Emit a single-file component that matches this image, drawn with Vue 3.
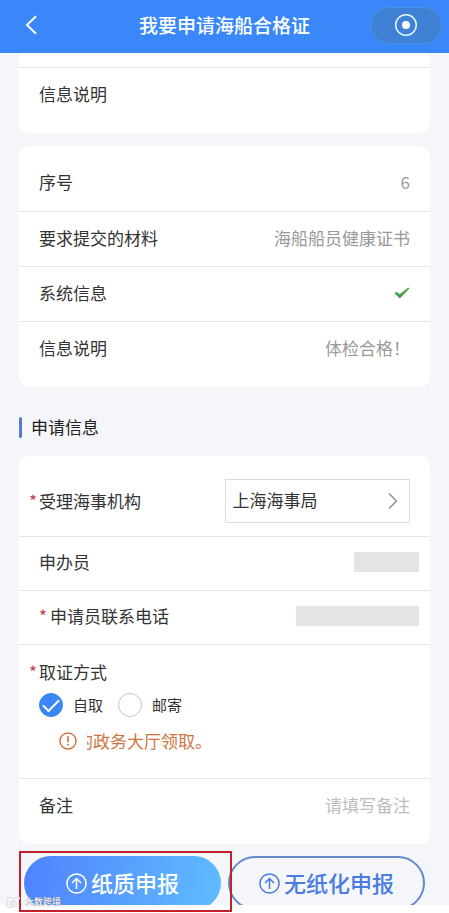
<script setup>
import { ref } from 'vue'

const material = [
  { label: '序号', value: '6' },
  { label: '要求提交的材料', value: '海船船员健康证书' },
  { label: '系统信息', ok: true },
  { label: '信息说明', value: '体检合格！' }
]
const org = ref('上海海事局')
const pickup = ref('self')
const remark = ref('')
</script>

<template>
  <div class="page">
    <header class="topbar">
      <button class="back" type="button" aria-label="返回">
        <svg width="14" height="20" viewBox="0 0 14 20"><path d="M12 1.200 3 10l9 8.800" fill="none" stroke="#fff" stroke-width="2" /></svg>
      </button>
      <h1>我要申请海船合格证</h1>
      <button class="capsule" type="button" aria-label="关闭">
        <svg width="24" height="24" viewBox="0 0 24 24"><circle cx="12" cy="12" r="10.3" fill="none" stroke="#e4f8ff" stroke-width="1.5" /><circle cx="12" cy="12" r="4" fill="#fff" /></svg>
      </button>
    </header>

    <main class="content">
      <section class="card first">
        <div class="row"><span class="label">信息说明</span></div>
      </section>

      <section class="card">
        <div v-for="item in material" :key="item.label" class="row">
          <span class="label">{{ item.label }}</span>
          <svg v-if="item.ok" class="tick" width="16" height="12" viewBox="0 0 16 12"><path d="M.5 6.200 2.600 4.800 5.600 7.200 14.400 .4 15.400 1.500 5.800 11.400Z" fill="#45a047" /></svg>
          <span v-else class="value">{{ item.value }}</span>
        </div>
      </section>

      <h2>申请信息</h2>

      <section class="card form">
        <div class="row org">
          <label class="label" for="org"><span class="star">*</span>受理海事机构</label>
          <div class="picker">
            <select id="org" v-model="org"><option>上海海事局</option></select>
            <svg class="arrow" width="10" height="18" viewBox="0 0 10 18"><path d="M1 1.5 8.5 9 1 16.5" fill="none" stroke="#8c8c8c" stroke-width="1.4" /></svg>
          </div>
        </div>
        <div class="row masked">
          <span class="label">申办员</span>
          <span class="mask short"></span>
        </div>
        <div class="row masked">
          <span class="label"><span class="star inner">*</span>申请员联系电话</span>
          <span class="mask"></span>
        </div>
        <fieldset class="row pickup">
          <legend class="label"><span class="star">*</span>取证方式</legend>
          <div class="choices">
            <label><input v-model="pickup" type="radio" name="pickup" value="self" />自取</label>
            <label><input v-model="pickup" type="radio" name="pickup" value="mail" />邮寄</label>
          </div>
          <div class="notice">
            <svg width="18" height="18" viewBox="0 0 18 18"><circle cx="9" cy="9" r="8" fill="none" stroke="#cf7440" stroke-width="1.4" /><path d="M9 4v6.5M9 12v1.6" stroke="#cf7440" stroke-width="1.6" /></svg>
            <div class="ticker"><span>的政务大厅领取。</span></div>
          </div>
        </fieldset>
        <div class="row">
          <label class="label" for="remark">备注</label>
          <input id="remark" v-model="remark" class="remark" type="text" placeholder="请填写备注" />
        </div>
      </section>
    </main>

    <footer class="actions">
      <div class="buttons">
        <button class="primary" type="button">
          <svg width="21" height="21" viewBox="0 0 21 21"><path d="M10.5 16V5.5M6 10l4.5-4.5L15 10" /><circle cx="10.5" cy="10.5" r="9.6" /></svg>
          <span>纸质申报</span>
        </button>
        <button class="plain" type="button">
          <svg width="21" height="21" viewBox="0 0 21 21"><path d="M10.5 16V5.5M6 10l4.5-4.5L15 10" /><circle cx="10.5" cy="10.5" r="9.6" /></svg>
          <span>无纸化申报</span>
        </button>
      </div>
      <div class="highlight"></div>
      <div class="watermark">
        <svg width="16" height="12" viewBox="0 0 16 12"><path d="M1 2.5 5 1l2 2 3-2 4 1.500M1 3v7l3 1.500 6-1.500V5.500L6 4.500M4 6h3v3H4z" fill="none" stroke="#fff" stroke-width="2" /><path d="M1 2.500 5 1l2 2 3-2 4 1.500M1 3v7l3 1.500 6-1.500V5.500L6 4.500M4 6h3v3H4z" fill="none" stroke="#c3c5c9" stroke-width=".8" /></svg>
        <span>大数跨境</span>
      </div>
    </footer>
  </div>
</template>

<style>
body {
  background: #fff;
}
</style>

<style scoped>
.page {
  font-family: "Noto Sans CJK SC", "Noto Sans", sans-serif;
  font-size: 17px;
  line-height: 24px;
  color: #333;
  background: #f4f6fa;
  border-bottom: 8px solid #fff;
}
.page * {
  box-sizing: border-box;
}
button, input, select {
  font: inherit;
  padding: 0;
  border: 0;
  background: none;
}
svg {
  display: block;
  flex: none;
}
.topbar {
  display: grid;
  grid-template-columns: 72px 1fr 72px;
  align-items: center;
  height: 53px;
  padding: 0 7px 3px;
  background: #3a87f9;
}
.back {
  display: flex;
  align-items: center;
  height: 36px;
  padding-left: 17px;
}
h1 {
  margin: 0;
  font-size: 19px;
  font-weight: 500;
  line-height: 28px;
  text-align: center;
  color: #fff;
}
.capsule {
  display: flex;
  align-items: center;
  justify-content: center;
  height: 37px;
  border: 1px solid #4c90e6;
  border-radius: 19px;
  background: #3f82d5;
}
.content {
  padding: 0 19px;
}
.card {
  padding: 10px 0 11px;
  margin-bottom: 13px;
  border-radius: 10px;
  background: #fff;
}
.card.first {
  padding-top: 14px;
  border-radius: 0 0 10px 10px;
}
.card.first .row {
  border-top: 1px solid #e4e6e8;
}
.row {
  display: flex;
  align-items: center;
  justify-content: space-between;
  min-height: 55px;
  padding: 0 20px 3px;
}
.row + .row {
  border-top: 1px solid #e4e6e8;
}
.label {
  position: relative;
  white-space: nowrap;
}
.value {
  color: #999;
}
.star {
  position: absolute;
  left: -10px;
  color: #c9404c;
}
.star.inner {
  position: static;
  margin-right: 3px;
}
h2 {
  display: flex;
  align-items: center;
  gap: 9px;
  margin: 0;
  padding: 15px 0 17px;
  font-size: 17px;
  font-weight: 400;
  line-height: 24px;
  color: #222;
}
h2::before {
  content: "";
  width: 3px;
  height: 21px;
  border-radius: 2px;
  background: #5a78d8;
}
.form {
  margin-bottom: 7px;
}
.row.org {
  min-height: 70px;
  padding-top: 3px;
}
.picker {
  position: relative;
  width: 50%;
}
.picker select {
  width: 100%;
  height: 44px;
  padding: 0 7px 2px;
  border: 1px solid #dcdcdc;
  border-radius: 0;
  appearance: none;
  color: #333;
}
.arrow {
  position: absolute;
  right: 12px;
  top: 13px;
  pointer-events: none;
}
.row.masked {
  min-height: 54px;
  padding-right: 11px;
}
.mask {
  width: 123px;
  height: 20px;
  background: #e5e3e4;
}
.mask.short {
  width: 65px;
}
.row.pickup {
  display: block;
  min-width: 0;
  margin: 0;
  padding-top: 15px;
  padding-bottom: 25px;
  border: 0;
  border-top: 1px solid #e4e6e8;
}
.pickup legend {
  float: left;
  width: 100%;
  padding: 0;
}
.choices {
  display: flex;
  clear: both;
  gap: 15px;
  padding-top: 9px;
}
.choices label {
  display: flex;
  align-items: center;
  gap: 10px;
  font-size: 15px;
}
.choices input {
  width: 24px;
  height: 24px;
  margin: 0;
  appearance: none;
  border: 1px solid #c4c4c4;
  border-radius: 50%;
}
.choices input:checked {
  display: grid;
  place-items: center;
  border-color: #3a87f3;
  background: #3a87f3;
}
.choices input:checked::after {
  content: "";
  width: 14px;
  height: 7px;
  margin-bottom: 4px;
  border: solid #fff;
  border-width: 0 0 2px 2px;
  transform: rotate(-45deg);
}
.notice {
  display: flex;
  align-items: center;
  gap: 10px;
  padding: 12px 0 0 20px;
  color: #cf7440;
}
.ticker {
  display: flex;
  justify-content: flex-end;
  width: 125px;
  overflow: hidden;
  white-space: nowrap;
}
.remark {
  flex: 1;
  min-width: 0;
  text-align: right;
  color: #333;
}
.remark::placeholder {
  color: #bdbdbd;
  opacity: 1;
}
.actions {
  position: relative;
}
.buttons {
  display: grid;
  grid-template-columns: 1fr 1fr;
  gap: 7px;
  height: 54px;
  padding: 5px 24px 0;
  overflow: hidden;
}
.buttons button {
  display: flex;
  align-items: center;
  justify-content: center;
  gap: 4px;
  height: 54px;
  border-radius: 27px;
  font-size: 22px;
  font-weight: 500;
}
.buttons span {
  padding-bottom: 3px;
}
.buttons svg {
  fill: none;
  stroke: currentColor;
  stroke-width: 1.5;
}
.primary {
  color: #fff;
  background: linear-gradient(100deg, #4f82fd, #5fbcff);
}
.buttons .plain {
  border: 2px solid #6688cb;
  color: #4a7ce0;
}
.highlight {
  position: absolute;
  left: 19px;
  top: 0;
  right: calc(50% - 7px);
  height: 61px;
  border: 2px solid #c3202c;
}
.watermark {
  position: absolute;
  left: 6px;
  bottom: -3px;
  display: flex;
  align-items: center;
  gap: 3px;
  font-size: 9px;
  line-height: 12px;
  color: #fff;
  text-shadow: 0 0 1px #888, 0 0 1px #888;
}
</style>
